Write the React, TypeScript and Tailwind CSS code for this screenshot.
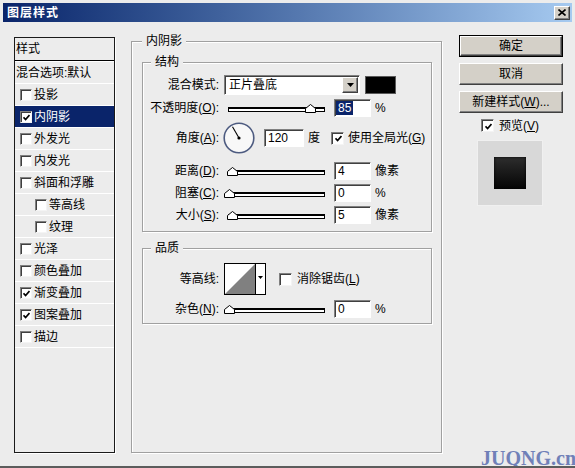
import React from 'react';

type Row = { label: string; on?: boolean; selected?: boolean; indent?: boolean };

const rows: Row[] = [
  { label: '投影' },
  { label: '内阴影', on: true, selected: true },
  { label: '外发光' },
  { label: '内发光' },
  { label: '斜面和浮雕' },
  { label: '等高线', indent: true },
  { label: '纹理', indent: true },
  { label: '光泽' },
  { label: '颜色叠加' },
  { label: '渐变叠加', on: true },
  { label: '图案叠加', on: true },
  { label: '描边' },
];

function Check({ on, small }: { on?: boolean; small?: boolean }) {
  return (
    <span
      className={`flex shrink-0 items-center justify-center bg-white border border-t-[#808080] border-l-[#808080] border-b-[#f4f4f4] border-r-[#f4f4f4] shadow-[inset_1px_1px_0_#404040] ${
        small ? 'w-[12px] h-[12px]' : 'w-[13px] h-[13px]'
      }`}
    >
      {on && (
        <svg width="7" height="7" viewBox="0 0 7 7" className="ml-[1px] mt-[1px]">
          <path d="M0.5 3.2 L2.6 5.5 L6.5 1" fill="none" stroke="#000" strokeWidth="1.7" />
        </svg>
      )}
    </span>
  );
}

function Raised({ className = '', children }: { className?: string; children: React.ReactNode }) {
  return (
    <div
      className={`flex items-center justify-center bg-[#d4d0c8] border border-t-white border-l-white border-b-[#404040] border-r-[#404040] shadow-[inset_-1px_-1px_0_#808080] ${className}`}
    >
      {children}
    </div>
  );
}

function Label({ children }: { children: React.ReactNode }) {
  return <span className="w-[76px] shrink-0 text-right whitespace-nowrap">{children}</span>;
}

function Field({ w, children }: { w: string; children: React.ReactNode }) {
  return (
    <div
      className={`${w} h-[18px] shrink-0 flex items-center pl-[1px] bg-white border border-t-[#808080] border-l-[#808080] border-b-white border-r-white shadow-[inset_1px_1px_0_#404040]`}
    >
      {children}
    </div>
  );
}

function Slider({ thumb }: { thumb: string }) {
  return (
    <div className="relative ml-[5px] w-[102px] h-[9px] shrink-0">
      <div className="absolute left-[4px] right-[1px] top-[3px] h-[5px] bg-white border border-black border-t-2" />
      <svg className={`absolute top-0 ${thumb}`} width="11" height="9" viewBox="0 0 11 9">
        <path d="M0.5 8.5 V4.5 L5.5 0.5 L10.5 4.5 V8.5 Z" fill="#fff" stroke="#000" />
      </svg>
    </div>
  );
}

function Group({ title, className, legend, children }: { title: string; className: string; legend: string; children: React.ReactNode }) {
  return (
    <fieldset className={`border border-[#a0a0a0] shadow-[inset_1px_1px_0_#fff,1px_1px_0_#fff] ${className}`}>
      <legend className={`${legend} px-[4px] h-[12px] leading-[12px] bg-[#ececec]`}>{title}</legend>
      {children}
    </fieldset>
  );
}

function StyleList() {
  return (
    <div className="mt-[15px] w-[101px] h-[416px] shrink-0 border border-[#1a1a1a] shadow-[1px_1px_0_#fff]">
      <div className="flex items-center h-[23px] pl-[1px] border-b border-black">样式</div>
      <div className="flex items-center h-[23px] pl-[1px] border-t border-b border-white whitespace-nowrap">混合选项:默认</div>
      {rows.map((r) => (
        <div
          key={r.label + (r.indent ? 'i' : '')}
          className={`flex items-center gap-[2px] h-[22px] border-b border-white ${r.indent ? 'pl-[20px]' : 'pl-[5px]'} ${
            r.selected ? 'bg-[#0a246a] text-white' : ''
          }`}
        >
          <Check on={r.on} small />
          <span>{r.label}</span>
        </div>
      ))}
    </div>
  );
}

function Structure() {
  return (
    <Group title="结构" className="mt-[9px] w-[290px] h-[176px]" legend="ml-[8px]">
      <div className="flex items-center h-[20px] mt-[7px]">
        <Label>混合模式:</Label>
        <div className="ml-[5px] w-[136px] h-[20px] shrink-0 flex items-center bg-white border border-t-[#808080] border-l-[#808080] border-b-white border-r-white shadow-[inset_1px_1px_0_#404040]">
          <span className="flex-1 pl-[4px]">正片叠底</span>
          <Raised className="w-[16px] h-[16px] mr-[1px]">
            <svg width="7" height="4" viewBox="0 0 7 4">
              <path d="M0 0 H7 L3.5 4 Z" fill="#000" />
            </svg>
          </Raised>
        </div>
        <div className="ml-[5px] w-[31px] h-[18px] bg-black border border-[#5a5a5a]" />
      </div>

      <div className="flex items-center h-[18px] mt-[4px]">
        <Label>
          不透明度(<span className="underline">O</span>):
        </Label>
        <Slider thumb="left-[81px]" />
        <div className="ml-[8px]">
          <Field w="w-[37px]">
            <span className="bg-[#0a246a] text-white px-[2px] leading-[14px]">85</span>
          </Field>
        </div>
        <span className="ml-[4px]">%</span>
      </div>

      <div className="flex items-center h-[32px] mt-[5px]">
        <Label>
          角度(<span className="underline">A</span>):
        </Label>
        <svg className="ml-[4px] shrink-0" width="32" height="32" viewBox="0 0 32 32">
          <circle cx="16" cy="16" r="14.8" fill="#f8f8f8" stroke="#4d5b80" strokeWidth="1.6" />
          <line x1="16" y1="16" x2="9.5" y2="4.8" stroke="#000" strokeWidth="1.1" />
          <circle cx="16" cy="16" r="1.6" fill="#000" />
        </svg>
        <div className="ml-[9px]">
          <Field w="w-[40px]">
            <span className="pl-[2px]">120</span>
          </Field>
        </div>
        <span className="ml-[4px]">度</span>
        <span className="ml-[11px]">
          <Check on />
        </span>
        <span className="ml-[4px] whitespace-nowrap">
          使用全局光(<span className="underline">G</span>)
        </span>
      </div>

      <div className="flex items-center h-[18px] mt-[8px]">
        <Label>
          距离(<span className="underline">D</span>):
        </Label>
        <Slider thumb="left-[3px]" />
        <div className="ml-[8px]">
          <Field w="w-[37px]">
            <span className="pl-[2px]">4</span>
          </Field>
        </div>
        <span className="ml-[4px]">像素</span>
      </div>

      <div className="flex items-center h-[18px] mt-[4px]">
        <Label>
          阻塞(<span className="underline">C</span>):
        </Label>
        <Slider thumb="left-[0px]" />
        <div className="ml-[8px]">
          <Field w="w-[37px]">
            <span className="pl-[2px]">0</span>
          </Field>
        </div>
        <span className="ml-[4px]">%</span>
      </div>

      <div className="flex items-center h-[18px] mt-[4px]">
        <Label>
          大小(<span className="underline">S</span>):
        </Label>
        <Slider thumb="left-[3px]" />
        <div className="ml-[8px]">
          <Field w="w-[37px]">
            <span className="pl-[2px]">5</span>
          </Field>
        </div>
        <span className="ml-[4px]">像素</span>
      </div>
    </Group>
  );
}

function Quality() {
  return (
    <Group title="品质" className="mt-[10px] w-[290px] h-[82px]" legend="ml-[8px]">
      <div className="flex items-center h-[32px] mt-[9px]">
        <Label>等高线:</Label>
        <div className="ml-[5px] flex w-[42px] h-[32px] shrink-0 border border-black bg-white">
          <svg width="30" height="30" viewBox="0 0 30 30" className="shrink-0">
            <polygon points="0,30 30,0 30,30" fill="#808080" />
          </svg>
          <div className="flex-1 flex justify-center pt-[12px] border-l border-black">
            <svg width="5" height="3" viewBox="0 0 5 3">
              <path d="M0 0 H5 L2.5 3 Z" fill="#000" />
            </svg>
          </div>
        </div>
        <span className="ml-[13px]">
          <Check />
        </span>
        <span className="ml-[5px] whitespace-nowrap">
          消除锯齿(<span className="underline">L</span>)
        </span>
      </div>

      <div className="flex items-center h-[18px] mt-[5px]">
        <Label>
          杂色(<span className="underline">N</span>):
        </Label>
        <Slider thumb="left-[0px]" />
        <div className="ml-[8px]">
          <Field w="w-[37px]">
            <span className="pl-[2px]">0</span>
          </Field>
        </div>
        <span className="ml-[4px]">%</span>
      </div>
    </Group>
  );
}

export default function App() {
  return (
    <div className="relative w-[575px] h-[468px] overflow-hidden flex flex-col bg-[#ececec] pt-[3px] px-[3px] border-b-2 border-b-[#5c5c5c] font-['Liberation_Sans','Noto_Sans_CJK_SC',sans-serif] text-[12px] leading-[14px] text-black">
      {/* title bar */}
      <div className="flex items-center justify-between h-[19px] shrink-0 pl-[4px] pr-[2px] bg-linear-to-r from-[#0a246a] to-[#a6caf0]">
        <span className="font-bold text-white tracking-[1px]">图层样式</span>
        <Raised className="w-[16px] h-[14px]">
          <svg width="8" height="7" viewBox="0 0 8 7">
            <path d="M0.5 0.5 L7.5 6.5 M7.5 0.5 L0.5 6.5" stroke="#000" strokeWidth="1.6" />
          </svg>
        </Raised>
      </div>

      <div className="flex flex-1 pl-[11px]">
        <StyleList />

        <div className="ml-[16px] mt-[13px] shrink-0">
          <Group title="内阴影" className="w-[311px] h-[418px]" legend="ml-[10px]">
            <div className="pl-[10px]">
              <Structure />
              <Quality />
            </div>
          </Group>
        </div>

        <div className="ml-[17px] mt-[13px] w-[104px] shrink-0 flex flex-col">
          <div className="h-[22px] border border-black">
            <Raised className="h-full">确定</Raised>
          </div>
          <Raised className="mt-[6px] h-[22px]">取消</Raised>
          <Raised className="mt-[6px] h-[22px] whitespace-nowrap">
            新建样式(<span className="underline">W</span>)...
          </Raised>
          <div className="flex items-center mt-[6px] ml-[22px] h-[13px]">
            <Check on />
            <span className="ml-[5px]">
              预览(<span className="underline">V</span>)
            </span>
          </div>
          <div className="mt-[8px] ml-[18px] w-[66px] h-[66px] flex items-center justify-center bg-[#d8d8d8] border border-[#f0f0f0]">
            <div className="w-[32px] h-[32px] bg-linear-to-b from-[#2e2e2e] to-[#060606] shadow-[inset_0_0_3px_#000]" />
          </div>
        </div>
      </div>

      <span className="absolute left-[481px] top-[447px] leading-[22px] text-[20px] font-bold text-[#7080b8] font-['Liberation_Serif',serif] whitespace-nowrap">
        JUQNG.cn
      </span>
    </div>
  );
}
